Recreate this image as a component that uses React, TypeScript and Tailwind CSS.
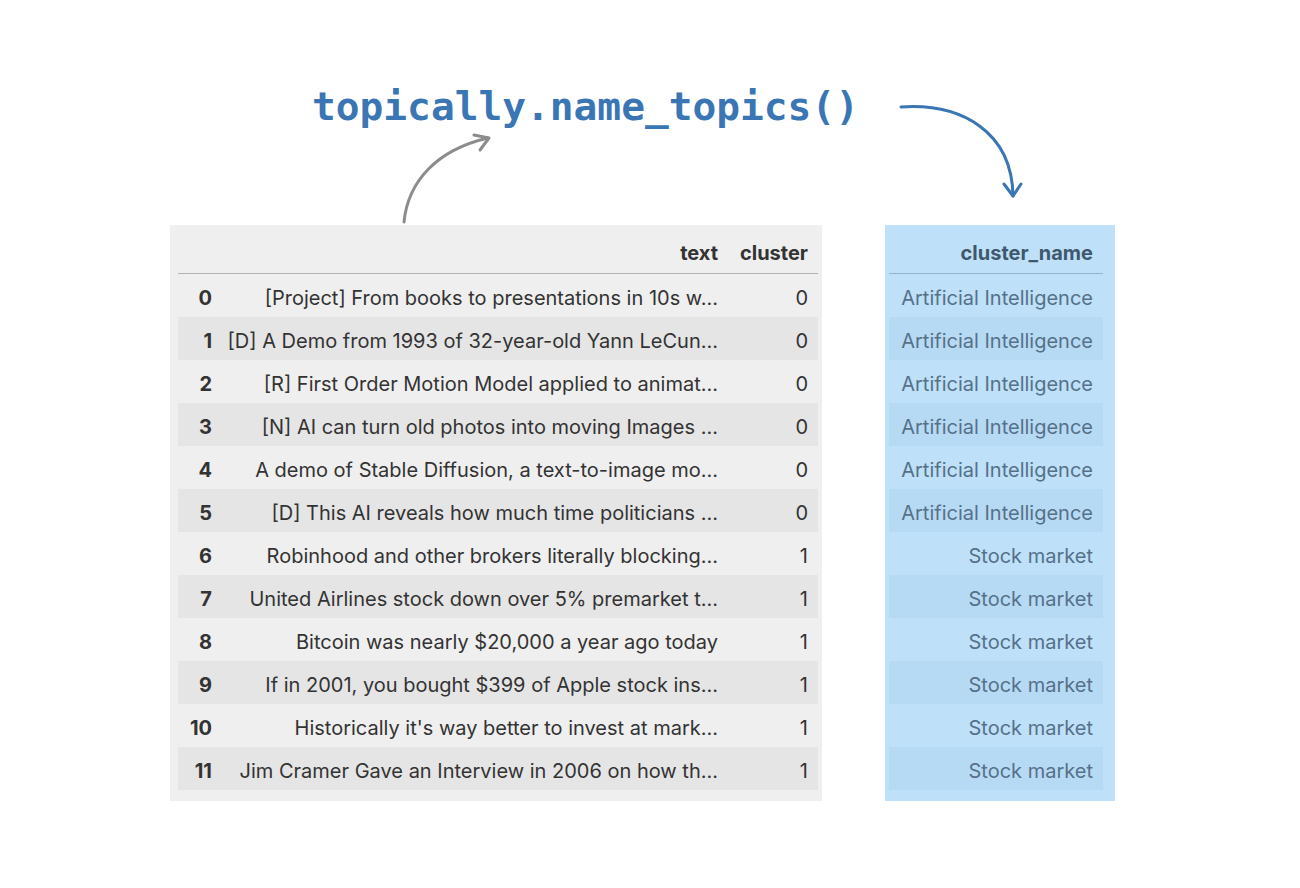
import * as React from 'react';

const rows: { text: string; cluster: number; name: string }[] = [
  { text: '[Project] From books to presentations in 10s w...', cluster: 0, name: 'Artificial Intelligence' },
  { text: '[D] A Demo from 1993 of 32-year-old Yann LeCun...', cluster: 0, name: 'Artificial Intelligence' },
  { text: '[R] First Order Motion Model applied to animat...', cluster: 0, name: 'Artificial Intelligence' },
  { text: '[N] AI can turn old photos into moving Images ...', cluster: 0, name: 'Artificial Intelligence' },
  { text: 'A demo of Stable Diffusion, a text-to-image mo...', cluster: 0, name: 'Artificial Intelligence' },
  { text: '[D] This AI reveals how much time politicians ...', cluster: 0, name: 'Artificial Intelligence' },
  { text: 'Robinhood and other brokers literally blocking...', cluster: 1, name: 'Stock market' },
  { text: 'United Airlines stock down over 5% premarket t...', cluster: 1, name: 'Stock market' },
  { text: 'Bitcoin was nearly $20,000 a year ago today', cluster: 1, name: 'Stock market' },
  { text: 'If in 2001, you bought $399 of Apple stock ins...', cluster: 1, name: 'Stock market' },
  { text: "Historically it's way better to invest at mark...", cluster: 1, name: 'Stock market' },
  { text: 'Jim Cramer Gave an Interview in 2006 on how th...', cluster: 1, name: 'Stock market' },
];

const sans = "font-['Inter','Liberation_Sans',sans-serif]";

export default function App() {
  return (
    <div className={`relative h-[888px] w-[1300px] overflow-hidden bg-white ${sans}`}>
      {/* title */}
      <div className="flex h-[210px] items-start pl-[312px] pt-[80px]">
        <h1 className="font-['DejaVu_Sans_Mono',monospace] text-[39.5px] font-bold leading-[52px] text-[#3a76b3]">
          topically.name_topics()
        </h1>
      </div>

      {/* tables */}
      <div className="mt-[15px] flex items-start pl-[170px]">
        {/* source dataframe */}
        <div className="w-[652px] bg-[#efefef] pb-[11px] pl-2 pr-1 text-[20px] text-[#333]">
          <div className="grid h-[49px] grid-cols-[44px_506px_90px] items-center border-b border-[#b4b4b4] pt-[8px] font-bold">
            <div />
            <div className="pr-[10px] text-right">text</div>
            <div className="pr-[10px] text-right">cluster</div>
          </div>
          {rows.map((r, i) => (
            <div
              key={i}
              className={`grid h-[43px] grid-cols-[44px_506px_90px] items-center pt-[4px] ${i % 2 === 1 ? 'bg-[#e5e5e5]' : ''}`}
            >
              <div className="pr-[10px] text-right font-bold">{i}</div>
              <div className="whitespace-nowrap pr-[10px] text-right">{r.text}</div>
              <div className="pr-[10px] text-right">{r.cluster}</div>
            </div>
          ))}
        </div>

        {/* result column */}
        <div className="ml-[63px] w-[230px] bg-[#bee0f8] pb-[11px] pl-1 pr-3 text-[20px] text-[#557189]">
          <div className="flex h-[49px] items-center justify-end border-b border-[#93b4cc] pr-[10px] pt-[8px] font-bold text-[#3f586d]">
            cluster_name
          </div>
          {rows.map((r, i) => (
            <div
              key={i}
              className={`flex h-[43px] items-center justify-end whitespace-nowrap pr-[10px] pt-[4px] ${i % 2 === 1 ? 'bg-[#b7daf4]' : ''}`}
            >
              {r.name}
            </div>
          ))}
        </div>
      </div>

      {/* arrows */}
      <svg className="pointer-events-none absolute left-0 top-0" width="1300" height="888" fill="none" strokeLinecap="round" strokeLinejoin="round">
        <path d="M404 222 C 408 182, 436 150, 488 138" stroke="#8c8c8c" strokeWidth="3" />
        <path d="M474 135 L489 138 L480 150" stroke="#8c8c8c" strokeWidth="3" />
        <path d="M901 107 C 962 103, 1012 132, 1013 196" stroke="#3a76b3" strokeWidth="3" />
        <path d="M1004 184 L1013 196 L1021 184" stroke="#3a76b3" strokeWidth="3" />
      </svg>
    </div>
  );
}
